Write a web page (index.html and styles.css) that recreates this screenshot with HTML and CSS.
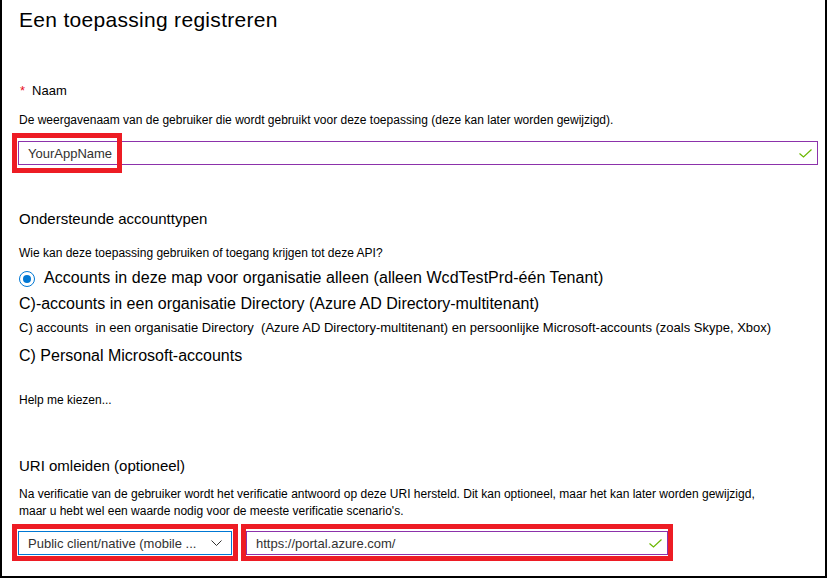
FILE: index.html
```html
<!DOCTYPE html>
<html lang="nl">
<head>
<meta charset="utf-8">
<title>Een toepassing registreren</title>
<link rel="stylesheet" href="styles.css">
</head>
<body>
<div class="page">
  <h1 class="title">Een toepassing registreren</h1>

  <div class="label"><span class="req">*</span>Naam</div>
  <div class="hint hint-name">De weergavenaam van de gebruiker die wordt gebruikt voor deze toepassing (deze kan later worden gewijzigd).</div>
  <div class="field field-name">
    <span class="field-text">YourAppName</span>
    <svg class="check" width="13" height="9" viewBox="0 0 13 9"><polyline points="0.5,4.5 4.5,8 12.5,0.5" fill="none" stroke="#6bb700" stroke-width="1.2"/></svg>
    <span class="mark mark-name"></span>
  </div>

  <h2 class="section section-accounts">Ondersteunde accounttypen</h2>
  <div class="hint hint-who">Wie kan deze toepassing gebruiken of toegang krijgen tot deze API?</div>
  <div class="option option-first">
    <span class="radio"><span class="radio-dot"></span></span>
    <span>Accounts in deze map voor organisatie alleen (alleen WcdTestPrd-één Tenant)</span>
  </div>
  <div class="option option-second">C)-accounts in een organisatie Directory (Azure AD Directory-multitenant)</div>
  <div class="option-small">C) accounts&nbsp; in een organisatie Directory&nbsp; (Azure AD Directory-multitenant) en persoonlijke Microsoft-accounts (zoals Skype, Xbox)</div>
  <div class="option option-fourth">C) Personal Microsoft-accounts</div>

  <div class="hint hint-help">Help me kiezen...</div>

  <h2 class="section section-uri">URI omleiden (optioneel)</h2>
  <div class="hint hint-uri">Na verificatie van de gebruiker wordt het verificatie antwoord op deze URI hersteld. Dit kan optioneel, maar het kan later worden gewijzigd,<br>maar u hebt wel een waarde nodig voor de meeste verificatie scenario's.</div>

  <div class="uri-row">
    <div class="select">
      <span class="field-text">Public client/native (mobile ...</span>
      <svg class="chevron" width="11" height="6" viewBox="0 0 11 6"><polyline points="0.5,0.5 5.5,5.5 10.5,0.5" fill="none" stroke="#323130" stroke-width="1"/></svg>
      <span class="mark mark-select"></span>
    </div>
    <div class="field field-uri">
      <span class="field-text">https://portal.azure.com/</span>
      <svg class="check" width="13" height="9" viewBox="0 0 13 9"><polyline points="0.5,4.5 4.5,8 12.5,0.5" fill="none" stroke="#6bb700" stroke-width="1.2"/></svg>
      <span class="mark mark-uri"></span>
    </div>
  </div>
</div>
</body>
</html>
```

FILE: styles.css
```css
html, body {
  margin: 0;
  padding: 0;
  background: #ffffff;
}

body {
  font-family: "Liberation Sans", Arial, sans-serif;
  color: #000000;
}

.page {
  box-sizing: border-box;
  width: 827px;
  height: 578px;
  border: 2px solid #000000;
  border-top: none;
  padding: 0 7px 0 16px;
  overflow: hidden;
}

.title {
  margin: 6px 0 0 1px;
  font-size: 21px;
  line-height: 28px;
  font-weight: normal;
  letter-spacing: 0.3px;
}

.label {
  margin-top: 49px;
  font-size: 13px;
  line-height: 16px;
  display: flex;
}

.req {
  color: #e81123;
  margin: 0 7px 0 2px;
}

.hint {
  font-size: 12px;
  line-height: 16px;
  padding-left: 1px;
}

.hint-name { margin-top: 13px; }

.field,
.select {
  position: relative;
  box-sizing: border-box;
  height: 24px;
  display: flex;
  align-items: center;
  justify-content: space-between;
  padding: 0 5px 0 9px;
  font-size: 13px;
  color: #323130;
}

.field {
  border: 1px solid #8c32ab;
}

.field-name {
  margin-top: 13px;
}

.check {
  display: block;
}

.mark {
  position: absolute;
  box-sizing: border-box;
  border: 5px solid #ed1c24;
  pointer-events: none;
}

.mark-name {
  left: -7px;
  top: -9px;
  width: 110px;
  height: 40px;
}

.section {
  margin: 44px 0 0 1px;
  font-size: 15px;
  line-height: 20px;
  font-weight: normal;
}

.hint-who { margin-top: 16px; }

.option {
  font-size: 16px;
  line-height: 20px;
  padding-left: 1px;
}

.option-first {
  margin-top: 7px;
  display: flex;
  align-items: center;
  gap: 9px;
  padding-left: 1px;
  letter-spacing: 0.05px;
}

.radio {
  box-sizing: border-box;
  width: 16px;
  height: 16px;
  border: 1.5px solid #0078d4;
  border-radius: 50%;
  display: flex;
  align-items: center;
  justify-content: center;
  position: relative;
  top: 1px;
}

.radio-dot {
  width: 8px;
  height: 8px;
  border-radius: 50%;
  background: #0078d4;
}

.option-second { margin-top: 6px; }

.option-small {
  margin-top: 5px;
  font-size: 13px;
  line-height: 18px;
  padding-left: 1px;
}

.option-fourth { margin-top: 9px; }

.hint-help { margin-top: 26px; }

.section-uri { margin-top: 48px; }

.hint-uri {
  margin-top: 10px;
  line-height: 17px;
}

.uri-row {
  margin-top: 11px;
  display: flex;
  gap: 14px;
}

.select {
  width: 214px;
  border: 1.5px solid #0078d4;
  padding-right: 9px;
}

.field-uri {
  width: 422px;
}

.mark-select {
  left: -7px;
  top: -8px;
  right: -7px;
  bottom: -7px;
}

.mark-uri {
  left: -6px;
  top: -8px;
  right: -6px;
  bottom: -7px;
}
```
